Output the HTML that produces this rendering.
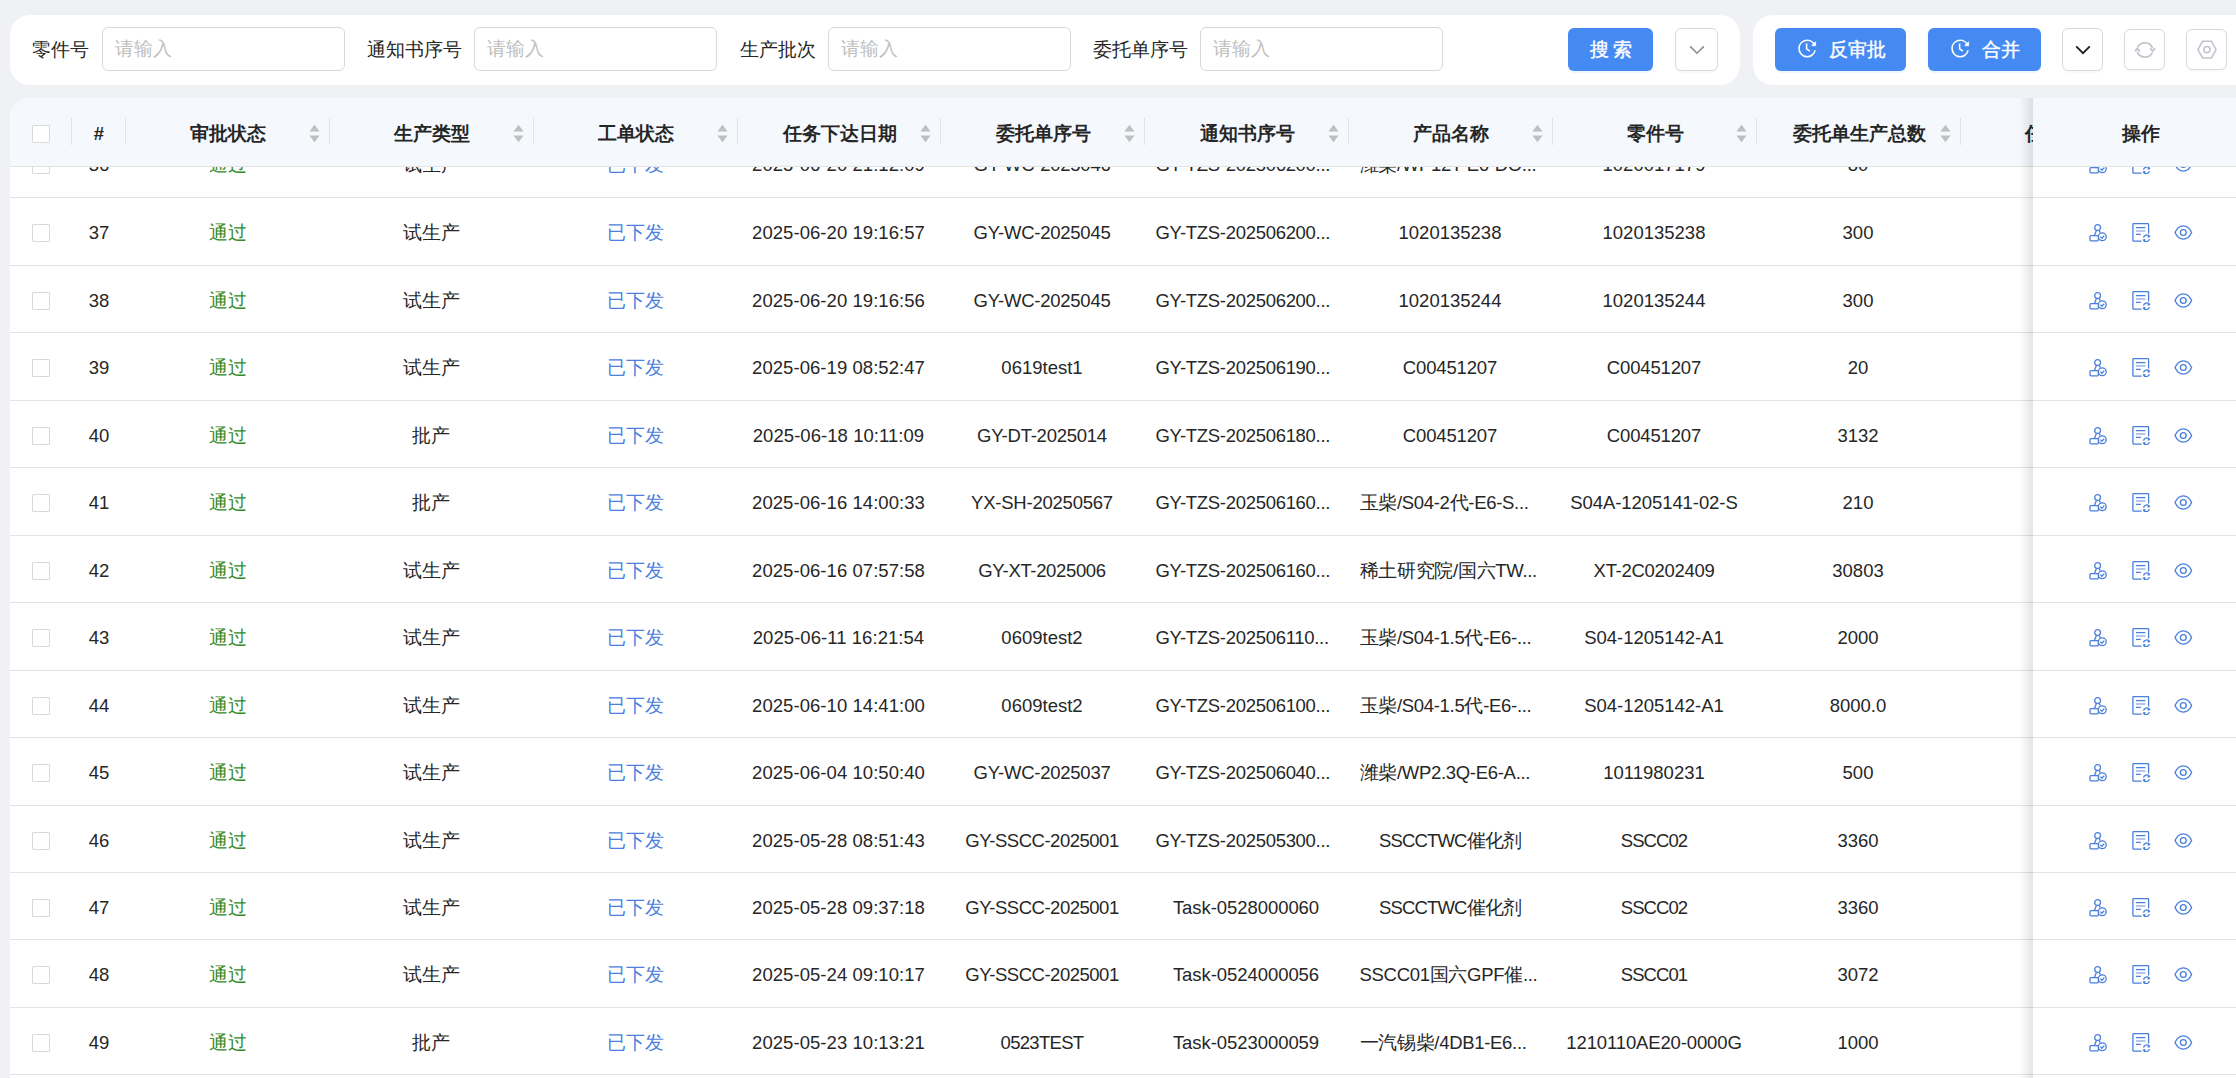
<!DOCTYPE html>
<html><head><meta charset="utf-8">
<style>
*{box-sizing:border-box}
html,body{margin:0;padding:0}
body{width:2236px;height:1078px;overflow:hidden;position:relative;background:#eff1f5;font-family:"Liberation Sans",sans-serif;color:#262626;font-size:18.5px}
.card{position:absolute;background:#fff;border-radius:20px}
.lbl{position:absolute;top:28px;height:44px;line-height:44px;color:#262626;white-space:nowrap}
.inp{position:absolute;top:27px;height:44px;width:243px;border:1px solid #d9d9d9;border-radius:6px;background:#fff;color:#bfbfbf;padding-left:12px;line-height:42px}
.btn{position:absolute;top:28px;height:43px;border-radius:6px;background:#448af2;color:#fff;box-shadow:0 2px 0 rgba(5,145,255,0.08);line-height:43px;text-align:center;-webkit-text-stroke:0.4px #fff}
.ibtn{position:absolute;height:42px;width:41px;border:1px solid #d9d9d9;border-radius:6px;background:#fff;box-shadow:0 2px 0 rgba(0,0,0,0.02)}
.ibtn > svg{position:absolute;left:50%;top:50%;transform:translate(-50%,-50%)}
.table{position:absolute;left:10px;top:98px;width:2300px;height:1000px;background:#fff;border-radius:20px 20px 0 0;overflow:hidden}
.thead{position:absolute;left:0;top:0;width:2300px;height:69px;background:#f5f9fe;border-bottom:1px solid #e3e3e3;z-index:3}
.th{position:absolute;top:0;height:68px;line-height:68px;padding-top:2px;text-align:center;font-weight:bold;color:#262626;white-space:nowrap}
.th .sep{position:absolute;right:0;top:20px;width:1px;height:27px;background:#e2e3e6}
.th .sort{position:absolute;right:10px;top:26.3px}
.tbody{position:absolute;left:0;top:69px;width:2300px;height:940px;overflow:hidden;z-index:1}
.tr{position:absolute;left:0;width:2300px;border-bottom:1px solid #e3e3e3;background:#fff}
.td{position:absolute;top:1px;height:67px;line-height:67px;text-align:center;white-space:nowrap;color:#262626}
.cb{position:absolute;width:18px;height:18px;border:1px solid #d9d9d9;border-radius:1px;background:#fff}
.green{color:#368a28}
.blue{color:#4d7fe0}
.fixed{position:absolute;left:2023px;top:0;width:300px;height:1000px;z-index:5}
.fixed .shadow{position:absolute;left:-14px;top:0;width:14px;height:1000px;background:linear-gradient(to left,rgba(0,0,0,0.10),rgba(0,0,0,0))}
</style></head><body>

<div class="card" style="left:10px;top:15px;width:1730px;height:70px"></div>
<div class="lbl" style="left:32px">零件号</div>
<div class="inp" style="left:102px">请输入</div>
<div class="lbl" style="left:367px">通知书序号</div>
<div class="inp" style="left:474px">请输入</div>
<div class="lbl" style="left:740px">生产批次</div>
<div class="inp" style="left:828px">请输入</div>
<div class="lbl" style="left:1093px">委托单序号</div>
<div class="inp" style="left:1200px">请输入</div>
<div class="btn" style="left:1568px;width:85px;letter-spacing:4px;text-indent:4px">搜索</div>
<div class="ibtn" style="left:1675px;top:28px;width:43px;height:43px"><svg width="16" height="10" viewBox="0 0 16 10"><path d="M1.2 1.4 L8 8.2 L14.8 1.4" fill="none" stroke="#8c8c8c" stroke-width="1.6"/></svg></div>
<div class="card" style="left:1753px;top:15px;width:600px;height:70px"></div>
<div class="btn" style="left:1775px;width:131px"><span style="position:absolute;left:23px;top:11.2px;line-height:0"><svg width="19" height="19" viewBox="0 0 19 19" fill="none" stroke="#fff" stroke-width="1.6"><path d="M16.4 5.6 A8.1 8.1 0 0 0 1.1 9.5 A8.1 8.1 0 0 0 17.1 11.4"/><path d="M17.6 2.8 L17.6 6.8 L13.8 6.6 Z" fill="#fff" stroke-width="0.8" stroke-linejoin="round"/><path d="M8.6 4.6 L8.6 9.8 L11.8 12.2"/></svg></span><span style="position:absolute;left:54px;top:0">反审批</span></div>
<div class="btn" style="left:1928px;width:113px"><span style="position:absolute;left:23px;top:11.2px;line-height:0"><svg width="19" height="19" viewBox="0 0 19 19" fill="none" stroke="#fff" stroke-width="1.6"><path d="M16.4 5.6 A8.1 8.1 0 0 0 1.1 9.5 A8.1 8.1 0 0 0 17.1 11.4"/><path d="M17.6 2.8 L17.6 6.8 L13.8 6.6 Z" fill="#fff" stroke-width="0.8" stroke-linejoin="round"/><path d="M8.6 4.6 L8.6 9.8 L11.8 12.2"/></svg></span><span style="position:absolute;left:54px;top:0">合并</span></div>
<div class="ibtn" style="left:2062px;top:28px;width:41px;height:43px"><svg width="16" height="10" viewBox="0 0 16 10"><path d="M1.2 1.4 L8 8.2 L14.8 1.4" fill="none" stroke="#1f1f1f" stroke-width="1.8"/></svg></div>
<div class="ibtn" style="left:2124px;top:29px;width:41px;height:41px"><svg width="24" height="22" viewBox="0 0 24 22" fill="none" stroke="#c0c4cc" stroke-width="1.7"><path d="M4.4 8.6 A8.3 8.3 0 0 1 19.6 9.2"/><path d="M19.4 13.6 A8.3 8.3 0 0 1 4.2 12.6"/><path d="M17.2 9.4 L19.8 12.2 L22 9.2" stroke-linejoin="round"/><path d="M2 12.4 L4.2 9.6 L6.8 12.4" stroke-linejoin="round"/></svg></div>
<div class="ibtn" style="left:2186px;top:29px;width:41px;height:41px"><span style="position:absolute;left:9px;top:10px;line-height:0"><svg width="22" height="20" viewBox="0 0 22 20" fill="none" stroke="#c0c4cc" stroke-width="1.6"><path d="M6.6 1.2 L15.4 1.2 L20 9.6 L15.4 18 L6.6 18 L2 9.6 Z" stroke-linejoin="round"/><circle cx="11" cy="9.6" r="3.1"/></svg></span></div>
<div class="table">
<div class="thead">
<div class="th" style="left:0.00px;width:62.00px"><div class="sep"></div><div class="cb" style="left:22px;top:27px"></div></div>
<div class="th" style="left:62.00px;width:54.00px">#<div class="sep"></div></div>
<div class="th" style="left:116.00px;width:204.00px">审批状态<div class="sep"></div><svg class="sort" width="11" height="19" viewBox="0 0 11 19"><path d="M5.5 0.8 L10.6 7.4 L0.4 7.4 Z" fill="#bfbfbf"/><path d="M0.4 11.6 L10.6 11.6 L5.5 18.2 Z" fill="#bfbfbf"/></svg></div>
<div class="th" style="left:320.00px;width:204.00px">生产类型<div class="sep"></div><svg class="sort" width="11" height="19" viewBox="0 0 11 19"><path d="M5.5 0.8 L10.6 7.4 L0.4 7.4 Z" fill="#bfbfbf"/><path d="M0.4 11.6 L10.6 11.6 L5.5 18.2 Z" fill="#bfbfbf"/></svg></div>
<div class="th" style="left:524.00px;width:204.00px">工单状态<div class="sep"></div><svg class="sort" width="11" height="19" viewBox="0 0 11 19"><path d="M5.5 0.8 L10.6 7.4 L0.4 7.4 Z" fill="#bfbfbf"/><path d="M0.4 11.6 L10.6 11.6 L5.5 18.2 Z" fill="#bfbfbf"/></svg></div>
<div class="th" style="left:728.00px;width:203.00px">任务下达日期<div class="sep"></div><svg class="sort" width="11" height="19" viewBox="0 0 11 19"><path d="M5.5 0.8 L10.6 7.4 L0.4 7.4 Z" fill="#bfbfbf"/><path d="M0.4 11.6 L10.6 11.6 L5.5 18.2 Z" fill="#bfbfbf"/></svg></div>
<div class="th" style="left:931.00px;width:204.00px">委托单序号<div class="sep"></div><svg class="sort" width="11" height="19" viewBox="0 0 11 19"><path d="M5.5 0.8 L10.6 7.4 L0.4 7.4 Z" fill="#bfbfbf"/><path d="M0.4 11.6 L10.6 11.6 L5.5 18.2 Z" fill="#bfbfbf"/></svg></div>
<div class="th" style="left:1135.00px;width:204.00px">通知书序号<div class="sep"></div><svg class="sort" width="11" height="19" viewBox="0 0 11 19"><path d="M5.5 0.8 L10.6 7.4 L0.4 7.4 Z" fill="#bfbfbf"/><path d="M0.4 11.6 L10.6 11.6 L5.5 18.2 Z" fill="#bfbfbf"/></svg></div>
<div class="th" style="left:1339.00px;width:204.00px">产品名称<div class="sep"></div><svg class="sort" width="11" height="19" viewBox="0 0 11 19"><path d="M5.5 0.8 L10.6 7.4 L0.4 7.4 Z" fill="#bfbfbf"/><path d="M0.4 11.6 L10.6 11.6 L5.5 18.2 Z" fill="#bfbfbf"/></svg></div>
<div class="th" style="left:1543.00px;width:204.00px">零件号<div class="sep"></div><svg class="sort" width="11" height="19" viewBox="0 0 11 19"><path d="M5.5 0.8 L10.6 7.4 L0.4 7.4 Z" fill="#bfbfbf"/><path d="M0.4 11.6 L10.6 11.6 L5.5 18.2 Z" fill="#bfbfbf"/></svg></div>
<div class="th" style="left:1747.00px;width:204.00px">委托单生产总数<div class="sep"></div><svg class="sort" width="11" height="19" viewBox="0 0 11 19"><path d="M5.5 0.8 L10.6 7.4 L0.4 7.4 Z" fill="#bfbfbf"/><path d="M0.4 11.6 L10.6 11.6 L5.5 18.2 Z" fill="#bfbfbf"/></svg></div>
<div class="th" style="left:1951.00px;width:204.00px;text-align:left;padding-left:64.0px">任务完成日期<div class="sep"></div><svg class="sort" width="11" height="19" viewBox="0 0 11 19"><path d="M5.5 0.8 L10.6 7.4 L0.4 7.4 Z" fill="#bfbfbf"/><path d="M0.4 11.6 L10.6 11.6 L5.5 18.2 Z" fill="#bfbfbf"/></svg></div>
</div>
<div class="tbody">
<div class="tr" style="top:-37px;height:68px">
<div class="cb" style="left:22px;top:25.6px"></div>
<div class="td" style="left:62.00px;width:54.00px">36</div>
<div class="td green" style="left:116.00px;width:204.00px">通过</div>
<div class="td" style="left:319.00px;width:204.00px">试生产</div>
<div class="td blue" style="left:523.00px;width:204.00px">已下发</div>
<div class="td" style="left:727.00px;width:203.00px;letter-spacing:0.053px">2025-06-20 21:12:09</div>
<div class="td" style="left:930.00px;width:204.00px;letter-spacing:-0.246px">GY-WC-2025046</div>
<div class="td" style="left:1135.00px;width:204.00px;text-align:left;padding-left:10.5px;letter-spacing:-0.3px">GY-TZS-202506200...</div>
<div class="td" style="left:1339.00px;width:204.00px;text-align:left;padding-left:10.5px;letter-spacing:-0.3px">潍柴/WP12T-E6-DO...</div>
<div class="td" style="left:1542.00px;width:204.00px">1020017179</div>
<div class="td" style="left:1746.00px;width:204.00px">80</div>
<div class="td" style="left:1950.00px;width:204.00px"></div>
</div>
<div class="tr" style="top:31px;height:68px">
<div class="cb" style="left:22px;top:25.6px"></div>
<div class="td" style="left:62.00px;width:54.00px">37</div>
<div class="td green" style="left:116.00px;width:204.00px">通过</div>
<div class="td" style="left:319.00px;width:204.00px">试生产</div>
<div class="td blue" style="left:523.00px;width:204.00px">已下发</div>
<div class="td" style="left:727.00px;width:203.00px;letter-spacing:0.053px">2025-06-20 19:16:57</div>
<div class="td" style="left:930.00px;width:204.00px;letter-spacing:-0.246px">GY-WC-2025045</div>
<div class="td" style="left:1135.00px;width:204.00px;text-align:left;padding-left:10.5px;letter-spacing:-0.3px">GY-TZS-202506200...</div>
<div class="td" style="left:1338.00px;width:204.00px">1020135238</div>
<div class="td" style="left:1542.00px;width:204.00px">1020135238</div>
<div class="td" style="left:1746.00px;width:204.00px">300</div>
<div class="td" style="left:1950.00px;width:204.00px"></div>
</div>
<div class="tr" style="top:99px;height:67px">
<div class="cb" style="left:22px;top:25.6px"></div>
<div class="td" style="left:62.00px;width:54.00px">38</div>
<div class="td green" style="left:116.00px;width:204.00px">通过</div>
<div class="td" style="left:319.00px;width:204.00px">试生产</div>
<div class="td blue" style="left:523.00px;width:204.00px">已下发</div>
<div class="td" style="left:727.00px;width:203.00px;letter-spacing:0.053px">2025-06-20 19:16:56</div>
<div class="td" style="left:930.00px;width:204.00px;letter-spacing:-0.246px">GY-WC-2025045</div>
<div class="td" style="left:1135.00px;width:204.00px;text-align:left;padding-left:10.5px;letter-spacing:-0.3px">GY-TZS-202506200...</div>
<div class="td" style="left:1338.00px;width:204.00px">1020135244</div>
<div class="td" style="left:1542.00px;width:204.00px">1020135244</div>
<div class="td" style="left:1746.00px;width:204.00px">300</div>
<div class="td" style="left:1950.00px;width:204.00px"></div>
</div>
<div class="tr" style="top:166px;height:68px">
<div class="cb" style="left:22px;top:25.6px"></div>
<div class="td" style="left:62.00px;width:54.00px">39</div>
<div class="td green" style="left:116.00px;width:204.00px">通过</div>
<div class="td" style="left:319.00px;width:204.00px">试生产</div>
<div class="td blue" style="left:523.00px;width:204.00px">已下发</div>
<div class="td" style="left:727.00px;width:203.00px;letter-spacing:0.053px">2025-06-19 08:52:47</div>
<div class="td" style="left:930.00px;width:204.00px">0619test1</div>
<div class="td" style="left:1135.00px;width:204.00px;text-align:left;padding-left:10.5px;letter-spacing:-0.3px">GY-TZS-202506190...</div>
<div class="td" style="left:1338.00px;width:204.00px;letter-spacing:-0.156px">C00451207</div>
<div class="td" style="left:1542.00px;width:204.00px;letter-spacing:-0.156px">C00451207</div>
<div class="td" style="left:1746.00px;width:204.00px">20</div>
<div class="td" style="left:1950.00px;width:204.00px"></div>
</div>
<div class="tr" style="top:234px;height:67px">
<div class="cb" style="left:22px;top:25.6px"></div>
<div class="td" style="left:62.00px;width:54.00px">40</div>
<div class="td green" style="left:116.00px;width:204.00px">通过</div>
<div class="td" style="left:319.00px;width:204.00px">批产</div>
<div class="td blue" style="left:523.00px;width:204.00px">已下发</div>
<div class="td" style="left:727.00px;width:203.00px;letter-spacing:0.053px">2025-06-18 10:11:09</div>
<div class="td" style="left:930.00px;width:204.00px;letter-spacing:-0.246px">GY-DT-2025014</div>
<div class="td" style="left:1135.00px;width:204.00px;text-align:left;padding-left:10.5px;letter-spacing:-0.3px">GY-TZS-202506180...</div>
<div class="td" style="left:1338.00px;width:204.00px;letter-spacing:-0.156px">C00451207</div>
<div class="td" style="left:1542.00px;width:204.00px;letter-spacing:-0.156px">C00451207</div>
<div class="td" style="left:1746.00px;width:204.00px">3132</div>
<div class="td" style="left:1950.00px;width:204.00px"></div>
</div>
<div class="tr" style="top:301px;height:68px">
<div class="cb" style="left:22px;top:25.6px"></div>
<div class="td" style="left:62.00px;width:54.00px">41</div>
<div class="td green" style="left:116.00px;width:204.00px">通过</div>
<div class="td" style="left:319.00px;width:204.00px">批产</div>
<div class="td blue" style="left:523.00px;width:204.00px">已下发</div>
<div class="td" style="left:727.00px;width:203.00px;letter-spacing:0.053px">2025-06-16 14:00:33</div>
<div class="td" style="left:930.00px;width:204.00px;letter-spacing:-0.229px">YX-SH-20250567</div>
<div class="td" style="left:1135.00px;width:204.00px;text-align:left;padding-left:10.5px;letter-spacing:-0.3px">GY-TZS-202506160...</div>
<div class="td" style="left:1339.00px;width:204.00px;text-align:left;padding-left:10.5px;letter-spacing:-0.3px">玉柴/S04-2代-E6-S...</div>
<div class="td" style="left:1542.00px;width:204.00px;letter-spacing:-0.076px">S04A-1205141-02-S</div>
<div class="td" style="left:1746.00px;width:204.00px">210</div>
<div class="td" style="left:1950.00px;width:204.00px"></div>
</div>
<div class="tr" style="top:369px;height:67px">
<div class="cb" style="left:22px;top:25.6px"></div>
<div class="td" style="left:62.00px;width:54.00px">42</div>
<div class="td green" style="left:116.00px;width:204.00px">通过</div>
<div class="td" style="left:319.00px;width:204.00px">试生产</div>
<div class="td blue" style="left:523.00px;width:204.00px">已下发</div>
<div class="td" style="left:727.00px;width:203.00px;letter-spacing:0.053px">2025-06-16 07:57:58</div>
<div class="td" style="left:930.00px;width:204.00px;letter-spacing:-0.354px">GY-XT-2025006</div>
<div class="td" style="left:1135.00px;width:204.00px;text-align:left;padding-left:10.5px;letter-spacing:-0.3px">GY-TZS-202506160...</div>
<div class="td" style="left:1339.00px;width:204.00px;text-align:left;padding-left:10.5px;letter-spacing:-0.3px">稀土研究院/国六TW...</div>
<div class="td" style="left:1542.00px;width:204.00px;letter-spacing:-0.308px">XT-2C0202409</div>
<div class="td" style="left:1746.00px;width:204.00px">30803</div>
<div class="td" style="left:1950.00px;width:204.00px"></div>
</div>
<div class="tr" style="top:436px;height:68px">
<div class="cb" style="left:22px;top:25.6px"></div>
<div class="td" style="left:62.00px;width:54.00px">43</div>
<div class="td green" style="left:116.00px;width:204.00px">通过</div>
<div class="td" style="left:319.00px;width:204.00px">试生产</div>
<div class="td blue" style="left:523.00px;width:204.00px">已下发</div>
<div class="td" style="left:727.00px;width:203.00px;letter-spacing:0.053px">2025-06-11 16:21:54</div>
<div class="td" style="left:930.00px;width:204.00px">0609test2</div>
<div class="td" style="left:1135.00px;width:204.00px;text-align:left;padding-left:10.5px;letter-spacing:-0.3px">GY-TZS-202506110...</div>
<div class="td" style="left:1339.00px;width:204.00px;text-align:left;padding-left:10.5px;letter-spacing:-0.3px">玉柴/S04-1.5代-E6-...</div>
<div class="td" style="left:1542.00px;width:204.00px;letter-spacing:-0.029px">S04-1205142-A1</div>
<div class="td" style="left:1746.00px;width:204.00px">2000</div>
<div class="td" style="left:1950.00px;width:204.00px"></div>
</div>
<div class="tr" style="top:504px;height:67px">
<div class="cb" style="left:22px;top:25.6px"></div>
<div class="td" style="left:62.00px;width:54.00px">44</div>
<div class="td green" style="left:116.00px;width:204.00px">通过</div>
<div class="td" style="left:319.00px;width:204.00px">试生产</div>
<div class="td blue" style="left:523.00px;width:204.00px">已下发</div>
<div class="td" style="left:727.00px;width:203.00px;letter-spacing:0.053px">2025-06-10 14:41:00</div>
<div class="td" style="left:930.00px;width:204.00px">0609test2</div>
<div class="td" style="left:1135.00px;width:204.00px;text-align:left;padding-left:10.5px;letter-spacing:-0.3px">GY-TZS-202506100...</div>
<div class="td" style="left:1339.00px;width:204.00px;text-align:left;padding-left:10.5px;letter-spacing:-0.3px">玉柴/S04-1.5代-E6-...</div>
<div class="td" style="left:1542.00px;width:204.00px;letter-spacing:-0.029px">S04-1205142-A1</div>
<div class="td" style="left:1746.00px;width:204.00px">8000.0</div>
<div class="td" style="left:1950.00px;width:204.00px"></div>
</div>
<div class="tr" style="top:571px;height:68px">
<div class="cb" style="left:22px;top:25.6px"></div>
<div class="td" style="left:62.00px;width:54.00px">45</div>
<div class="td green" style="left:116.00px;width:204.00px">通过</div>
<div class="td" style="left:319.00px;width:204.00px">试生产</div>
<div class="td blue" style="left:523.00px;width:204.00px">已下发</div>
<div class="td" style="left:727.00px;width:203.00px;letter-spacing:0.053px">2025-06-04 10:50:40</div>
<div class="td" style="left:930.00px;width:204.00px;letter-spacing:-0.246px">GY-WC-2025037</div>
<div class="td" style="left:1135.00px;width:204.00px;text-align:left;padding-left:10.5px;letter-spacing:-0.3px">GY-TZS-202506040...</div>
<div class="td" style="left:1339.00px;width:204.00px;text-align:left;padding-left:10.5px;letter-spacing:-0.3px">潍柴/WP2.3Q-E6-A...</div>
<div class="td" style="left:1542.00px;width:204.00px">1011980231</div>
<div class="td" style="left:1746.00px;width:204.00px">500</div>
<div class="td" style="left:1950.00px;width:204.00px"></div>
</div>
<div class="tr" style="top:639px;height:67px">
<div class="cb" style="left:22px;top:25.6px"></div>
<div class="td" style="left:62.00px;width:54.00px">46</div>
<div class="td green" style="left:116.00px;width:204.00px">通过</div>
<div class="td" style="left:319.00px;width:204.00px">试生产</div>
<div class="td blue" style="left:523.00px;width:204.00px">已下发</div>
<div class="td" style="left:727.00px;width:203.00px;letter-spacing:0.053px">2025-05-28 08:51:43</div>
<div class="td" style="left:930.00px;width:204.00px;letter-spacing:-0.493px">GY-SSCC-2025001</div>
<div class="td" style="left:1135.00px;width:204.00px;text-align:left;padding-left:10.5px;letter-spacing:-0.3px">GY-TZS-202505300...</div>
<div class="td" style="left:1338.00px;width:204.00px;letter-spacing:-0.840px">SSCCTWC催化剂</div>
<div class="td" style="left:1542.00px;width:204.00px;letter-spacing:-0.933px">SSCC02</div>
<div class="td" style="left:1746.00px;width:204.00px">3360</div>
<div class="td" style="left:1950.00px;width:204.00px"></div>
</div>
<div class="tr" style="top:706px;height:67px">
<div class="cb" style="left:22px;top:25.6px"></div>
<div class="td" style="left:62.00px;width:54.00px">47</div>
<div class="td green" style="left:116.00px;width:204.00px">通过</div>
<div class="td" style="left:319.00px;width:204.00px">试生产</div>
<div class="td blue" style="left:523.00px;width:204.00px">已下发</div>
<div class="td" style="left:727.00px;width:203.00px;letter-spacing:0.053px">2025-05-28 09:37:18</div>
<div class="td" style="left:930.00px;width:204.00px;letter-spacing:-0.493px">GY-SSCC-2025001</div>
<div class="td" style="left:1134.00px;width:204.00px;letter-spacing:-0.060px">Task-0528000060</div>
<div class="td" style="left:1338.00px;width:204.00px;letter-spacing:-0.840px">SSCCTWC催化剂</div>
<div class="td" style="left:1542.00px;width:204.00px;letter-spacing:-0.933px">SSCC02</div>
<div class="td" style="left:1746.00px;width:204.00px">3360</div>
<div class="td" style="left:1950.00px;width:204.00px"></div>
</div>
<div class="tr" style="top:773px;height:68px">
<div class="cb" style="left:22px;top:25.6px"></div>
<div class="td" style="left:62.00px;width:54.00px">48</div>
<div class="td green" style="left:116.00px;width:204.00px">通过</div>
<div class="td" style="left:319.00px;width:204.00px">试生产</div>
<div class="td blue" style="left:523.00px;width:204.00px">已下发</div>
<div class="td" style="left:727.00px;width:203.00px;letter-spacing:0.053px">2025-05-24 09:10:17</div>
<div class="td" style="left:930.00px;width:204.00px;letter-spacing:-0.493px">GY-SSCC-2025001</div>
<div class="td" style="left:1134.00px;width:204.00px;letter-spacing:-0.060px">Task-0524000056</div>
<div class="td" style="left:1339.00px;width:204.00px;text-align:left;padding-left:10.5px;letter-spacing:-0.3px">SSCC01国六GPF催...</div>
<div class="td" style="left:1542.00px;width:204.00px;letter-spacing:-0.933px">SSCC01</div>
<div class="td" style="left:1746.00px;width:204.00px">3072</div>
<div class="td" style="left:1950.00px;width:204.00px"></div>
</div>
<div class="tr" style="top:841px;height:67px">
<div class="cb" style="left:22px;top:25.6px"></div>
<div class="td" style="left:62.00px;width:54.00px">49</div>
<div class="td green" style="left:116.00px;width:204.00px">通过</div>
<div class="td" style="left:319.00px;width:204.00px">批产</div>
<div class="td blue" style="left:523.00px;width:204.00px">已下发</div>
<div class="td" style="left:727.00px;width:203.00px;letter-spacing:0.053px">2025-05-23 10:13:21</div>
<div class="td" style="left:930.00px;width:204.00px;letter-spacing:-0.700px">0523TEST</div>
<div class="td" style="left:1134.00px;width:204.00px;letter-spacing:-0.060px">Task-0523000059</div>
<div class="td" style="left:1339.00px;width:204.00px;text-align:left;padding-left:10.5px;letter-spacing:-0.3px">一汽锡柴/4DB1-E6...</div>
<div class="td" style="left:1542.00px;width:204.00px;letter-spacing:-0.135px">1210110AE20-0000G</div>
<div class="td" style="left:1746.00px;width:204.00px">1000</div>
<div class="td" style="left:1950.00px;width:204.00px"></div>
</div>
<div class="tr" style="top:908px;height:68px">
<div class="cb" style="left:22px;top:25.6px"></div>
<div class="td" style="left:62.00px;width:54.00px">50</div>
<div class="td green" style="left:116.00px;width:204.00px">通过</div>
<div class="td" style="left:319.00px;width:204.00px">试生产</div>
<div class="td blue" style="left:523.00px;width:204.00px">已下发</div>
<div class="td" style="left:727.00px;width:203.00px;letter-spacing:0.053px">2025-05-22 10:13:21</div>
<div class="td" style="left:930.00px;width:204.00px;letter-spacing:-0.700px">0522TEST</div>
<div class="td" style="left:1134.00px;width:204.00px;letter-spacing:-0.060px">Task-0522000058</div>
<div class="td" style="left:1339.00px;width:204.00px;text-align:left;padding-left:10.5px;letter-spacing:-0.3px">一汽锡柴/4DB1-E6...</div>
<div class="td" style="left:1542.00px;width:204.00px;letter-spacing:-0.135px">1210110AE20-0000G</div>
<div class="td" style="left:1746.00px;width:204.00px">1000</div>
<div class="td" style="left:1950.00px;width:204.00px"></div>
</div>
</div>
<div class="fixed"><div class="shadow"></div>
<div style="position:absolute;left:0;top:0;width:300px;height:69px;background:#f5f9fe;border-bottom:1px solid #e3e3e3;z-index:4"></div>
<div class="th" style="left:0;width:216px;z-index:5">操作</div>
<div style="position:absolute;left:0;top:32px;width:300px;height:68px;border-bottom:1px solid #e3e3e3;background:#fff;z-index:1">
<span style="position:absolute;left:56px;top:24.5px;line-height:0"><svg width="19" height="19" viewBox="0 0 19 19" fill="none" stroke="#4a7fda" stroke-width="1.3"><circle cx="8.6" cy="4.6" r="2.9"/><path d="M7.4 7.4 L5.4 12.4"/><path d="M10 7.4 L11.4 9.6"/><rect x="1" y="12.6" width="8.4" height="5.2" rx="1"/><circle cx="13.3" cy="13.8" r="3.9" fill="#fff"/><path d="M11.4 13.6 L12.9 15.2 L15.3 12.6"/></svg></span>
<span style="position:absolute;left:99px;top:24.5px;line-height:0"><svg width="20" height="19" viewBox="0 0 20 19" fill="none" stroke="#4a7fda" stroke-width="1.3"><path d="M9.6 18.2 L1.6 18.2 Q0.9 18.2 0.9 17.5 L0.9 1.4 Q0.9 0.7 1.6 0.7 L15.9 0.7 Q16.6 0.7 16.6 1.4 L16.6 10.4"/><path d="M4 4.6 L13.4 4.6"/><path d="M4 8 L13.4 8" stroke="#a3b9e3" stroke-width="1.6"/><path d="M4 11.4 L8.8 11.4"/><path d="M11.5 14.6 A3.2 3.2 0 0 1 17.3 13.4"/><path d="M17.4 16 A3.2 3.2 0 0 1 11.6 17.2"/><path d="M16.2 11.8 L17.4 13.6 L15.6 14" /><path d="M12.8 18.8 L11.6 17 L13.4 16.6"/></svg></span>
<span style="position:absolute;left:140.8px;top:26.6px;line-height:0"><svg width="19" height="15" viewBox="0 0 19 15" fill="none" stroke="#4a7fda" stroke-width="1.35"><path d="M1 7.5 C3.4 2.2 6.4 0.9 9.3 0.9 C12.2 0.9 15.2 2.2 17.6 7.5 C15.2 12.8 12.2 14.1 9.3 14.1 C6.4 14.1 3.4 12.8 1 7.5 Z" stroke-linejoin="round"/><circle cx="9.3" cy="7.5" r="2.9"/></svg></span>
</div>
<div style="position:absolute;left:0;top:100px;width:300px;height:68px;border-bottom:1px solid #e3e3e3;background:#fff;z-index:1">
<span style="position:absolute;left:56px;top:24.5px;line-height:0"><svg width="19" height="19" viewBox="0 0 19 19" fill="none" stroke="#4a7fda" stroke-width="1.3"><circle cx="8.6" cy="4.6" r="2.9"/><path d="M7.4 7.4 L5.4 12.4"/><path d="M10 7.4 L11.4 9.6"/><rect x="1" y="12.6" width="8.4" height="5.2" rx="1"/><circle cx="13.3" cy="13.8" r="3.9" fill="#fff"/><path d="M11.4 13.6 L12.9 15.2 L15.3 12.6"/></svg></span>
<span style="position:absolute;left:99px;top:24.5px;line-height:0"><svg width="20" height="19" viewBox="0 0 20 19" fill="none" stroke="#4a7fda" stroke-width="1.3"><path d="M9.6 18.2 L1.6 18.2 Q0.9 18.2 0.9 17.5 L0.9 1.4 Q0.9 0.7 1.6 0.7 L15.9 0.7 Q16.6 0.7 16.6 1.4 L16.6 10.4"/><path d="M4 4.6 L13.4 4.6"/><path d="M4 8 L13.4 8" stroke="#a3b9e3" stroke-width="1.6"/><path d="M4 11.4 L8.8 11.4"/><path d="M11.5 14.6 A3.2 3.2 0 0 1 17.3 13.4"/><path d="M17.4 16 A3.2 3.2 0 0 1 11.6 17.2"/><path d="M16.2 11.8 L17.4 13.6 L15.6 14" /><path d="M12.8 18.8 L11.6 17 L13.4 16.6"/></svg></span>
<span style="position:absolute;left:140.8px;top:26.6px;line-height:0"><svg width="19" height="15" viewBox="0 0 19 15" fill="none" stroke="#4a7fda" stroke-width="1.35"><path d="M1 7.5 C3.4 2.2 6.4 0.9 9.3 0.9 C12.2 0.9 15.2 2.2 17.6 7.5 C15.2 12.8 12.2 14.1 9.3 14.1 C6.4 14.1 3.4 12.8 1 7.5 Z" stroke-linejoin="round"/><circle cx="9.3" cy="7.5" r="2.9"/></svg></span>
</div>
<div style="position:absolute;left:0;top:168px;width:300px;height:67px;border-bottom:1px solid #e3e3e3;background:#fff;z-index:1">
<span style="position:absolute;left:56px;top:24.5px;line-height:0"><svg width="19" height="19" viewBox="0 0 19 19" fill="none" stroke="#4a7fda" stroke-width="1.3"><circle cx="8.6" cy="4.6" r="2.9"/><path d="M7.4 7.4 L5.4 12.4"/><path d="M10 7.4 L11.4 9.6"/><rect x="1" y="12.6" width="8.4" height="5.2" rx="1"/><circle cx="13.3" cy="13.8" r="3.9" fill="#fff"/><path d="M11.4 13.6 L12.9 15.2 L15.3 12.6"/></svg></span>
<span style="position:absolute;left:99px;top:24.5px;line-height:0"><svg width="20" height="19" viewBox="0 0 20 19" fill="none" stroke="#4a7fda" stroke-width="1.3"><path d="M9.6 18.2 L1.6 18.2 Q0.9 18.2 0.9 17.5 L0.9 1.4 Q0.9 0.7 1.6 0.7 L15.9 0.7 Q16.6 0.7 16.6 1.4 L16.6 10.4"/><path d="M4 4.6 L13.4 4.6"/><path d="M4 8 L13.4 8" stroke="#a3b9e3" stroke-width="1.6"/><path d="M4 11.4 L8.8 11.4"/><path d="M11.5 14.6 A3.2 3.2 0 0 1 17.3 13.4"/><path d="M17.4 16 A3.2 3.2 0 0 1 11.6 17.2"/><path d="M16.2 11.8 L17.4 13.6 L15.6 14" /><path d="M12.8 18.8 L11.6 17 L13.4 16.6"/></svg></span>
<span style="position:absolute;left:140.8px;top:26.6px;line-height:0"><svg width="19" height="15" viewBox="0 0 19 15" fill="none" stroke="#4a7fda" stroke-width="1.35"><path d="M1 7.5 C3.4 2.2 6.4 0.9 9.3 0.9 C12.2 0.9 15.2 2.2 17.6 7.5 C15.2 12.8 12.2 14.1 9.3 14.1 C6.4 14.1 3.4 12.8 1 7.5 Z" stroke-linejoin="round"/><circle cx="9.3" cy="7.5" r="2.9"/></svg></span>
</div>
<div style="position:absolute;left:0;top:235px;width:300px;height:68px;border-bottom:1px solid #e3e3e3;background:#fff;z-index:1">
<span style="position:absolute;left:56px;top:24.5px;line-height:0"><svg width="19" height="19" viewBox="0 0 19 19" fill="none" stroke="#4a7fda" stroke-width="1.3"><circle cx="8.6" cy="4.6" r="2.9"/><path d="M7.4 7.4 L5.4 12.4"/><path d="M10 7.4 L11.4 9.6"/><rect x="1" y="12.6" width="8.4" height="5.2" rx="1"/><circle cx="13.3" cy="13.8" r="3.9" fill="#fff"/><path d="M11.4 13.6 L12.9 15.2 L15.3 12.6"/></svg></span>
<span style="position:absolute;left:99px;top:24.5px;line-height:0"><svg width="20" height="19" viewBox="0 0 20 19" fill="none" stroke="#4a7fda" stroke-width="1.3"><path d="M9.6 18.2 L1.6 18.2 Q0.9 18.2 0.9 17.5 L0.9 1.4 Q0.9 0.7 1.6 0.7 L15.9 0.7 Q16.6 0.7 16.6 1.4 L16.6 10.4"/><path d="M4 4.6 L13.4 4.6"/><path d="M4 8 L13.4 8" stroke="#a3b9e3" stroke-width="1.6"/><path d="M4 11.4 L8.8 11.4"/><path d="M11.5 14.6 A3.2 3.2 0 0 1 17.3 13.4"/><path d="M17.4 16 A3.2 3.2 0 0 1 11.6 17.2"/><path d="M16.2 11.8 L17.4 13.6 L15.6 14" /><path d="M12.8 18.8 L11.6 17 L13.4 16.6"/></svg></span>
<span style="position:absolute;left:140.8px;top:26.6px;line-height:0"><svg width="19" height="15" viewBox="0 0 19 15" fill="none" stroke="#4a7fda" stroke-width="1.35"><path d="M1 7.5 C3.4 2.2 6.4 0.9 9.3 0.9 C12.2 0.9 15.2 2.2 17.6 7.5 C15.2 12.8 12.2 14.1 9.3 14.1 C6.4 14.1 3.4 12.8 1 7.5 Z" stroke-linejoin="round"/><circle cx="9.3" cy="7.5" r="2.9"/></svg></span>
</div>
<div style="position:absolute;left:0;top:303px;width:300px;height:67px;border-bottom:1px solid #e3e3e3;background:#fff;z-index:1">
<span style="position:absolute;left:56px;top:24.5px;line-height:0"><svg width="19" height="19" viewBox="0 0 19 19" fill="none" stroke="#4a7fda" stroke-width="1.3"><circle cx="8.6" cy="4.6" r="2.9"/><path d="M7.4 7.4 L5.4 12.4"/><path d="M10 7.4 L11.4 9.6"/><rect x="1" y="12.6" width="8.4" height="5.2" rx="1"/><circle cx="13.3" cy="13.8" r="3.9" fill="#fff"/><path d="M11.4 13.6 L12.9 15.2 L15.3 12.6"/></svg></span>
<span style="position:absolute;left:99px;top:24.5px;line-height:0"><svg width="20" height="19" viewBox="0 0 20 19" fill="none" stroke="#4a7fda" stroke-width="1.3"><path d="M9.6 18.2 L1.6 18.2 Q0.9 18.2 0.9 17.5 L0.9 1.4 Q0.9 0.7 1.6 0.7 L15.9 0.7 Q16.6 0.7 16.6 1.4 L16.6 10.4"/><path d="M4 4.6 L13.4 4.6"/><path d="M4 8 L13.4 8" stroke="#a3b9e3" stroke-width="1.6"/><path d="M4 11.4 L8.8 11.4"/><path d="M11.5 14.6 A3.2 3.2 0 0 1 17.3 13.4"/><path d="M17.4 16 A3.2 3.2 0 0 1 11.6 17.2"/><path d="M16.2 11.8 L17.4 13.6 L15.6 14" /><path d="M12.8 18.8 L11.6 17 L13.4 16.6"/></svg></span>
<span style="position:absolute;left:140.8px;top:26.6px;line-height:0"><svg width="19" height="15" viewBox="0 0 19 15" fill="none" stroke="#4a7fda" stroke-width="1.35"><path d="M1 7.5 C3.4 2.2 6.4 0.9 9.3 0.9 C12.2 0.9 15.2 2.2 17.6 7.5 C15.2 12.8 12.2 14.1 9.3 14.1 C6.4 14.1 3.4 12.8 1 7.5 Z" stroke-linejoin="round"/><circle cx="9.3" cy="7.5" r="2.9"/></svg></span>
</div>
<div style="position:absolute;left:0;top:370px;width:300px;height:68px;border-bottom:1px solid #e3e3e3;background:#fff;z-index:1">
<span style="position:absolute;left:56px;top:24.5px;line-height:0"><svg width="19" height="19" viewBox="0 0 19 19" fill="none" stroke="#4a7fda" stroke-width="1.3"><circle cx="8.6" cy="4.6" r="2.9"/><path d="M7.4 7.4 L5.4 12.4"/><path d="M10 7.4 L11.4 9.6"/><rect x="1" y="12.6" width="8.4" height="5.2" rx="1"/><circle cx="13.3" cy="13.8" r="3.9" fill="#fff"/><path d="M11.4 13.6 L12.9 15.2 L15.3 12.6"/></svg></span>
<span style="position:absolute;left:99px;top:24.5px;line-height:0"><svg width="20" height="19" viewBox="0 0 20 19" fill="none" stroke="#4a7fda" stroke-width="1.3"><path d="M9.6 18.2 L1.6 18.2 Q0.9 18.2 0.9 17.5 L0.9 1.4 Q0.9 0.7 1.6 0.7 L15.9 0.7 Q16.6 0.7 16.6 1.4 L16.6 10.4"/><path d="M4 4.6 L13.4 4.6"/><path d="M4 8 L13.4 8" stroke="#a3b9e3" stroke-width="1.6"/><path d="M4 11.4 L8.8 11.4"/><path d="M11.5 14.6 A3.2 3.2 0 0 1 17.3 13.4"/><path d="M17.4 16 A3.2 3.2 0 0 1 11.6 17.2"/><path d="M16.2 11.8 L17.4 13.6 L15.6 14" /><path d="M12.8 18.8 L11.6 17 L13.4 16.6"/></svg></span>
<span style="position:absolute;left:140.8px;top:26.6px;line-height:0"><svg width="19" height="15" viewBox="0 0 19 15" fill="none" stroke="#4a7fda" stroke-width="1.35"><path d="M1 7.5 C3.4 2.2 6.4 0.9 9.3 0.9 C12.2 0.9 15.2 2.2 17.6 7.5 C15.2 12.8 12.2 14.1 9.3 14.1 C6.4 14.1 3.4 12.8 1 7.5 Z" stroke-linejoin="round"/><circle cx="9.3" cy="7.5" r="2.9"/></svg></span>
</div>
<div style="position:absolute;left:0;top:438px;width:300px;height:67px;border-bottom:1px solid #e3e3e3;background:#fff;z-index:1">
<span style="position:absolute;left:56px;top:24.5px;line-height:0"><svg width="19" height="19" viewBox="0 0 19 19" fill="none" stroke="#4a7fda" stroke-width="1.3"><circle cx="8.6" cy="4.6" r="2.9"/><path d="M7.4 7.4 L5.4 12.4"/><path d="M10 7.4 L11.4 9.6"/><rect x="1" y="12.6" width="8.4" height="5.2" rx="1"/><circle cx="13.3" cy="13.8" r="3.9" fill="#fff"/><path d="M11.4 13.6 L12.9 15.2 L15.3 12.6"/></svg></span>
<span style="position:absolute;left:99px;top:24.5px;line-height:0"><svg width="20" height="19" viewBox="0 0 20 19" fill="none" stroke="#4a7fda" stroke-width="1.3"><path d="M9.6 18.2 L1.6 18.2 Q0.9 18.2 0.9 17.5 L0.9 1.4 Q0.9 0.7 1.6 0.7 L15.9 0.7 Q16.6 0.7 16.6 1.4 L16.6 10.4"/><path d="M4 4.6 L13.4 4.6"/><path d="M4 8 L13.4 8" stroke="#a3b9e3" stroke-width="1.6"/><path d="M4 11.4 L8.8 11.4"/><path d="M11.5 14.6 A3.2 3.2 0 0 1 17.3 13.4"/><path d="M17.4 16 A3.2 3.2 0 0 1 11.6 17.2"/><path d="M16.2 11.8 L17.4 13.6 L15.6 14" /><path d="M12.8 18.8 L11.6 17 L13.4 16.6"/></svg></span>
<span style="position:absolute;left:140.8px;top:26.6px;line-height:0"><svg width="19" height="15" viewBox="0 0 19 15" fill="none" stroke="#4a7fda" stroke-width="1.35"><path d="M1 7.5 C3.4 2.2 6.4 0.9 9.3 0.9 C12.2 0.9 15.2 2.2 17.6 7.5 C15.2 12.8 12.2 14.1 9.3 14.1 C6.4 14.1 3.4 12.8 1 7.5 Z" stroke-linejoin="round"/><circle cx="9.3" cy="7.5" r="2.9"/></svg></span>
</div>
<div style="position:absolute;left:0;top:505px;width:300px;height:68px;border-bottom:1px solid #e3e3e3;background:#fff;z-index:1">
<span style="position:absolute;left:56px;top:24.5px;line-height:0"><svg width="19" height="19" viewBox="0 0 19 19" fill="none" stroke="#4a7fda" stroke-width="1.3"><circle cx="8.6" cy="4.6" r="2.9"/><path d="M7.4 7.4 L5.4 12.4"/><path d="M10 7.4 L11.4 9.6"/><rect x="1" y="12.6" width="8.4" height="5.2" rx="1"/><circle cx="13.3" cy="13.8" r="3.9" fill="#fff"/><path d="M11.4 13.6 L12.9 15.2 L15.3 12.6"/></svg></span>
<span style="position:absolute;left:99px;top:24.5px;line-height:0"><svg width="20" height="19" viewBox="0 0 20 19" fill="none" stroke="#4a7fda" stroke-width="1.3"><path d="M9.6 18.2 L1.6 18.2 Q0.9 18.2 0.9 17.5 L0.9 1.4 Q0.9 0.7 1.6 0.7 L15.9 0.7 Q16.6 0.7 16.6 1.4 L16.6 10.4"/><path d="M4 4.6 L13.4 4.6"/><path d="M4 8 L13.4 8" stroke="#a3b9e3" stroke-width="1.6"/><path d="M4 11.4 L8.8 11.4"/><path d="M11.5 14.6 A3.2 3.2 0 0 1 17.3 13.4"/><path d="M17.4 16 A3.2 3.2 0 0 1 11.6 17.2"/><path d="M16.2 11.8 L17.4 13.6 L15.6 14" /><path d="M12.8 18.8 L11.6 17 L13.4 16.6"/></svg></span>
<span style="position:absolute;left:140.8px;top:26.6px;line-height:0"><svg width="19" height="15" viewBox="0 0 19 15" fill="none" stroke="#4a7fda" stroke-width="1.35"><path d="M1 7.5 C3.4 2.2 6.4 0.9 9.3 0.9 C12.2 0.9 15.2 2.2 17.6 7.5 C15.2 12.8 12.2 14.1 9.3 14.1 C6.4 14.1 3.4 12.8 1 7.5 Z" stroke-linejoin="round"/><circle cx="9.3" cy="7.5" r="2.9"/></svg></span>
</div>
<div style="position:absolute;left:0;top:573px;width:300px;height:67px;border-bottom:1px solid #e3e3e3;background:#fff;z-index:1">
<span style="position:absolute;left:56px;top:24.5px;line-height:0"><svg width="19" height="19" viewBox="0 0 19 19" fill="none" stroke="#4a7fda" stroke-width="1.3"><circle cx="8.6" cy="4.6" r="2.9"/><path d="M7.4 7.4 L5.4 12.4"/><path d="M10 7.4 L11.4 9.6"/><rect x="1" y="12.6" width="8.4" height="5.2" rx="1"/><circle cx="13.3" cy="13.8" r="3.9" fill="#fff"/><path d="M11.4 13.6 L12.9 15.2 L15.3 12.6"/></svg></span>
<span style="position:absolute;left:99px;top:24.5px;line-height:0"><svg width="20" height="19" viewBox="0 0 20 19" fill="none" stroke="#4a7fda" stroke-width="1.3"><path d="M9.6 18.2 L1.6 18.2 Q0.9 18.2 0.9 17.5 L0.9 1.4 Q0.9 0.7 1.6 0.7 L15.9 0.7 Q16.6 0.7 16.6 1.4 L16.6 10.4"/><path d="M4 4.6 L13.4 4.6"/><path d="M4 8 L13.4 8" stroke="#a3b9e3" stroke-width="1.6"/><path d="M4 11.4 L8.8 11.4"/><path d="M11.5 14.6 A3.2 3.2 0 0 1 17.3 13.4"/><path d="M17.4 16 A3.2 3.2 0 0 1 11.6 17.2"/><path d="M16.2 11.8 L17.4 13.6 L15.6 14" /><path d="M12.8 18.8 L11.6 17 L13.4 16.6"/></svg></span>
<span style="position:absolute;left:140.8px;top:26.6px;line-height:0"><svg width="19" height="15" viewBox="0 0 19 15" fill="none" stroke="#4a7fda" stroke-width="1.35"><path d="M1 7.5 C3.4 2.2 6.4 0.9 9.3 0.9 C12.2 0.9 15.2 2.2 17.6 7.5 C15.2 12.8 12.2 14.1 9.3 14.1 C6.4 14.1 3.4 12.8 1 7.5 Z" stroke-linejoin="round"/><circle cx="9.3" cy="7.5" r="2.9"/></svg></span>
</div>
<div style="position:absolute;left:0;top:640px;width:300px;height:68px;border-bottom:1px solid #e3e3e3;background:#fff;z-index:1">
<span style="position:absolute;left:56px;top:24.5px;line-height:0"><svg width="19" height="19" viewBox="0 0 19 19" fill="none" stroke="#4a7fda" stroke-width="1.3"><circle cx="8.6" cy="4.6" r="2.9"/><path d="M7.4 7.4 L5.4 12.4"/><path d="M10 7.4 L11.4 9.6"/><rect x="1" y="12.6" width="8.4" height="5.2" rx="1"/><circle cx="13.3" cy="13.8" r="3.9" fill="#fff"/><path d="M11.4 13.6 L12.9 15.2 L15.3 12.6"/></svg></span>
<span style="position:absolute;left:99px;top:24.5px;line-height:0"><svg width="20" height="19" viewBox="0 0 20 19" fill="none" stroke="#4a7fda" stroke-width="1.3"><path d="M9.6 18.2 L1.6 18.2 Q0.9 18.2 0.9 17.5 L0.9 1.4 Q0.9 0.7 1.6 0.7 L15.9 0.7 Q16.6 0.7 16.6 1.4 L16.6 10.4"/><path d="M4 4.6 L13.4 4.6"/><path d="M4 8 L13.4 8" stroke="#a3b9e3" stroke-width="1.6"/><path d="M4 11.4 L8.8 11.4"/><path d="M11.5 14.6 A3.2 3.2 0 0 1 17.3 13.4"/><path d="M17.4 16 A3.2 3.2 0 0 1 11.6 17.2"/><path d="M16.2 11.8 L17.4 13.6 L15.6 14" /><path d="M12.8 18.8 L11.6 17 L13.4 16.6"/></svg></span>
<span style="position:absolute;left:140.8px;top:26.6px;line-height:0"><svg width="19" height="15" viewBox="0 0 19 15" fill="none" stroke="#4a7fda" stroke-width="1.35"><path d="M1 7.5 C3.4 2.2 6.4 0.9 9.3 0.9 C12.2 0.9 15.2 2.2 17.6 7.5 C15.2 12.8 12.2 14.1 9.3 14.1 C6.4 14.1 3.4 12.8 1 7.5 Z" stroke-linejoin="round"/><circle cx="9.3" cy="7.5" r="2.9"/></svg></span>
</div>
<div style="position:absolute;left:0;top:708px;width:300px;height:67px;border-bottom:1px solid #e3e3e3;background:#fff;z-index:1">
<span style="position:absolute;left:56px;top:24.5px;line-height:0"><svg width="19" height="19" viewBox="0 0 19 19" fill="none" stroke="#4a7fda" stroke-width="1.3"><circle cx="8.6" cy="4.6" r="2.9"/><path d="M7.4 7.4 L5.4 12.4"/><path d="M10 7.4 L11.4 9.6"/><rect x="1" y="12.6" width="8.4" height="5.2" rx="1"/><circle cx="13.3" cy="13.8" r="3.9" fill="#fff"/><path d="M11.4 13.6 L12.9 15.2 L15.3 12.6"/></svg></span>
<span style="position:absolute;left:99px;top:24.5px;line-height:0"><svg width="20" height="19" viewBox="0 0 20 19" fill="none" stroke="#4a7fda" stroke-width="1.3"><path d="M9.6 18.2 L1.6 18.2 Q0.9 18.2 0.9 17.5 L0.9 1.4 Q0.9 0.7 1.6 0.7 L15.9 0.7 Q16.6 0.7 16.6 1.4 L16.6 10.4"/><path d="M4 4.6 L13.4 4.6"/><path d="M4 8 L13.4 8" stroke="#a3b9e3" stroke-width="1.6"/><path d="M4 11.4 L8.8 11.4"/><path d="M11.5 14.6 A3.2 3.2 0 0 1 17.3 13.4"/><path d="M17.4 16 A3.2 3.2 0 0 1 11.6 17.2"/><path d="M16.2 11.8 L17.4 13.6 L15.6 14" /><path d="M12.8 18.8 L11.6 17 L13.4 16.6"/></svg></span>
<span style="position:absolute;left:140.8px;top:26.6px;line-height:0"><svg width="19" height="15" viewBox="0 0 19 15" fill="none" stroke="#4a7fda" stroke-width="1.35"><path d="M1 7.5 C3.4 2.2 6.4 0.9 9.3 0.9 C12.2 0.9 15.2 2.2 17.6 7.5 C15.2 12.8 12.2 14.1 9.3 14.1 C6.4 14.1 3.4 12.8 1 7.5 Z" stroke-linejoin="round"/><circle cx="9.3" cy="7.5" r="2.9"/></svg></span>
</div>
<div style="position:absolute;left:0;top:775px;width:300px;height:67px;border-bottom:1px solid #e3e3e3;background:#fff;z-index:1">
<span style="position:absolute;left:56px;top:24.5px;line-height:0"><svg width="19" height="19" viewBox="0 0 19 19" fill="none" stroke="#4a7fda" stroke-width="1.3"><circle cx="8.6" cy="4.6" r="2.9"/><path d="M7.4 7.4 L5.4 12.4"/><path d="M10 7.4 L11.4 9.6"/><rect x="1" y="12.6" width="8.4" height="5.2" rx="1"/><circle cx="13.3" cy="13.8" r="3.9" fill="#fff"/><path d="M11.4 13.6 L12.9 15.2 L15.3 12.6"/></svg></span>
<span style="position:absolute;left:99px;top:24.5px;line-height:0"><svg width="20" height="19" viewBox="0 0 20 19" fill="none" stroke="#4a7fda" stroke-width="1.3"><path d="M9.6 18.2 L1.6 18.2 Q0.9 18.2 0.9 17.5 L0.9 1.4 Q0.9 0.7 1.6 0.7 L15.9 0.7 Q16.6 0.7 16.6 1.4 L16.6 10.4"/><path d="M4 4.6 L13.4 4.6"/><path d="M4 8 L13.4 8" stroke="#a3b9e3" stroke-width="1.6"/><path d="M4 11.4 L8.8 11.4"/><path d="M11.5 14.6 A3.2 3.2 0 0 1 17.3 13.4"/><path d="M17.4 16 A3.2 3.2 0 0 1 11.6 17.2"/><path d="M16.2 11.8 L17.4 13.6 L15.6 14" /><path d="M12.8 18.8 L11.6 17 L13.4 16.6"/></svg></span>
<span style="position:absolute;left:140.8px;top:26.6px;line-height:0"><svg width="19" height="15" viewBox="0 0 19 15" fill="none" stroke="#4a7fda" stroke-width="1.35"><path d="M1 7.5 C3.4 2.2 6.4 0.9 9.3 0.9 C12.2 0.9 15.2 2.2 17.6 7.5 C15.2 12.8 12.2 14.1 9.3 14.1 C6.4 14.1 3.4 12.8 1 7.5 Z" stroke-linejoin="round"/><circle cx="9.3" cy="7.5" r="2.9"/></svg></span>
</div>
<div style="position:absolute;left:0;top:842px;width:300px;height:68px;border-bottom:1px solid #e3e3e3;background:#fff;z-index:1">
<span style="position:absolute;left:56px;top:24.5px;line-height:0"><svg width="19" height="19" viewBox="0 0 19 19" fill="none" stroke="#4a7fda" stroke-width="1.3"><circle cx="8.6" cy="4.6" r="2.9"/><path d="M7.4 7.4 L5.4 12.4"/><path d="M10 7.4 L11.4 9.6"/><rect x="1" y="12.6" width="8.4" height="5.2" rx="1"/><circle cx="13.3" cy="13.8" r="3.9" fill="#fff"/><path d="M11.4 13.6 L12.9 15.2 L15.3 12.6"/></svg></span>
<span style="position:absolute;left:99px;top:24.5px;line-height:0"><svg width="20" height="19" viewBox="0 0 20 19" fill="none" stroke="#4a7fda" stroke-width="1.3"><path d="M9.6 18.2 L1.6 18.2 Q0.9 18.2 0.9 17.5 L0.9 1.4 Q0.9 0.7 1.6 0.7 L15.9 0.7 Q16.6 0.7 16.6 1.4 L16.6 10.4"/><path d="M4 4.6 L13.4 4.6"/><path d="M4 8 L13.4 8" stroke="#a3b9e3" stroke-width="1.6"/><path d="M4 11.4 L8.8 11.4"/><path d="M11.5 14.6 A3.2 3.2 0 0 1 17.3 13.4"/><path d="M17.4 16 A3.2 3.2 0 0 1 11.6 17.2"/><path d="M16.2 11.8 L17.4 13.6 L15.6 14" /><path d="M12.8 18.8 L11.6 17 L13.4 16.6"/></svg></span>
<span style="position:absolute;left:140.8px;top:26.6px;line-height:0"><svg width="19" height="15" viewBox="0 0 19 15" fill="none" stroke="#4a7fda" stroke-width="1.35"><path d="M1 7.5 C3.4 2.2 6.4 0.9 9.3 0.9 C12.2 0.9 15.2 2.2 17.6 7.5 C15.2 12.8 12.2 14.1 9.3 14.1 C6.4 14.1 3.4 12.8 1 7.5 Z" stroke-linejoin="round"/><circle cx="9.3" cy="7.5" r="2.9"/></svg></span>
</div>
<div style="position:absolute;left:0;top:910px;width:300px;height:67px;border-bottom:1px solid #e3e3e3;background:#fff;z-index:1">
<span style="position:absolute;left:56px;top:24.5px;line-height:0"><svg width="19" height="19" viewBox="0 0 19 19" fill="none" stroke="#4a7fda" stroke-width="1.3"><circle cx="8.6" cy="4.6" r="2.9"/><path d="M7.4 7.4 L5.4 12.4"/><path d="M10 7.4 L11.4 9.6"/><rect x="1" y="12.6" width="8.4" height="5.2" rx="1"/><circle cx="13.3" cy="13.8" r="3.9" fill="#fff"/><path d="M11.4 13.6 L12.9 15.2 L15.3 12.6"/></svg></span>
<span style="position:absolute;left:99px;top:24.5px;line-height:0"><svg width="20" height="19" viewBox="0 0 20 19" fill="none" stroke="#4a7fda" stroke-width="1.3"><path d="M9.6 18.2 L1.6 18.2 Q0.9 18.2 0.9 17.5 L0.9 1.4 Q0.9 0.7 1.6 0.7 L15.9 0.7 Q16.6 0.7 16.6 1.4 L16.6 10.4"/><path d="M4 4.6 L13.4 4.6"/><path d="M4 8 L13.4 8" stroke="#a3b9e3" stroke-width="1.6"/><path d="M4 11.4 L8.8 11.4"/><path d="M11.5 14.6 A3.2 3.2 0 0 1 17.3 13.4"/><path d="M17.4 16 A3.2 3.2 0 0 1 11.6 17.2"/><path d="M16.2 11.8 L17.4 13.6 L15.6 14" /><path d="M12.8 18.8 L11.6 17 L13.4 16.6"/></svg></span>
<span style="position:absolute;left:140.8px;top:26.6px;line-height:0"><svg width="19" height="15" viewBox="0 0 19 15" fill="none" stroke="#4a7fda" stroke-width="1.35"><path d="M1 7.5 C3.4 2.2 6.4 0.9 9.3 0.9 C12.2 0.9 15.2 2.2 17.6 7.5 C15.2 12.8 12.2 14.1 9.3 14.1 C6.4 14.1 3.4 12.8 1 7.5 Z" stroke-linejoin="round"/><circle cx="9.3" cy="7.5" r="2.9"/></svg></span>
</div>
<div style="position:absolute;left:0;top:977px;width:300px;height:68px;border-bottom:1px solid #e3e3e3;background:#fff;z-index:1">
<span style="position:absolute;left:56px;top:24.5px;line-height:0"><svg width="19" height="19" viewBox="0 0 19 19" fill="none" stroke="#4a7fda" stroke-width="1.3"><circle cx="8.6" cy="4.6" r="2.9"/><path d="M7.4 7.4 L5.4 12.4"/><path d="M10 7.4 L11.4 9.6"/><rect x="1" y="12.6" width="8.4" height="5.2" rx="1"/><circle cx="13.3" cy="13.8" r="3.9" fill="#fff"/><path d="M11.4 13.6 L12.9 15.2 L15.3 12.6"/></svg></span>
<span style="position:absolute;left:99px;top:24.5px;line-height:0"><svg width="20" height="19" viewBox="0 0 20 19" fill="none" stroke="#4a7fda" stroke-width="1.3"><path d="M9.6 18.2 L1.6 18.2 Q0.9 18.2 0.9 17.5 L0.9 1.4 Q0.9 0.7 1.6 0.7 L15.9 0.7 Q16.6 0.7 16.6 1.4 L16.6 10.4"/><path d="M4 4.6 L13.4 4.6"/><path d="M4 8 L13.4 8" stroke="#a3b9e3" stroke-width="1.6"/><path d="M4 11.4 L8.8 11.4"/><path d="M11.5 14.6 A3.2 3.2 0 0 1 17.3 13.4"/><path d="M17.4 16 A3.2 3.2 0 0 1 11.6 17.2"/><path d="M16.2 11.8 L17.4 13.6 L15.6 14" /><path d="M12.8 18.8 L11.6 17 L13.4 16.6"/></svg></span>
<span style="position:absolute;left:140.8px;top:26.6px;line-height:0"><svg width="19" height="15" viewBox="0 0 19 15" fill="none" stroke="#4a7fda" stroke-width="1.35"><path d="M1 7.5 C3.4 2.2 6.4 0.9 9.3 0.9 C12.2 0.9 15.2 2.2 17.6 7.5 C15.2 12.8 12.2 14.1 9.3 14.1 C6.4 14.1 3.4 12.8 1 7.5 Z" stroke-linejoin="round"/><circle cx="9.3" cy="7.5" r="2.9"/></svg></span>
</div>
</div>
</div>
</body></html>
